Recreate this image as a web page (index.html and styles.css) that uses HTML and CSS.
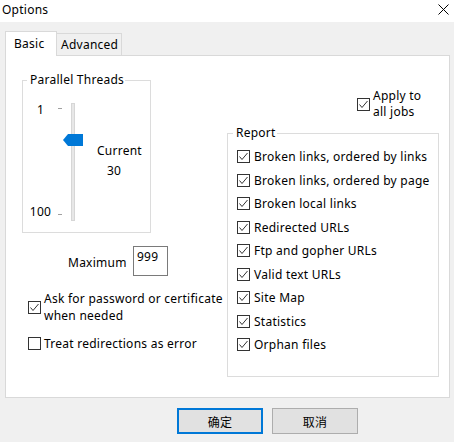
FILE: index.html
```html
<!DOCTYPE html>
<html lang="en">
  <head>
    <meta charset="UTF-8" />
    <title>Options</title>
    <link rel="stylesheet" href="styles.css">
  </head>
  <body>
    <div class="titlebar">
      <span>Options</span>
      <svg class="close" width="11" height="11" viewBox="0 0 11 11">
        <path d="M0.5 0.5 L10.5 10.5 M10.5 0.5 L0.5 10.5" stroke="#000" stroke-width="1" fill="none" />
      </svg>
    </div>

    <div class="tabs">
      <div class="tab active">Basic</div>
      <div class="tab">Advanced</div>
    </div>

    <div class="panel">
      <div class="col-left">
        <fieldset class="group threads">
          <legend>Parallel Threads</legend>
          <div class="slider">
            <div class="scale"><span>1</span><span>100</span></div>
            <div class="ticks"><i></i><i></i></div>
            <div class="track"><div class="thumb"></div></div>
            <div class="current">
              <div>Current</div>
              <div class="value">30</div>
            </div>
          </div>
        </fieldset>

        <div class="max-row">
          <span class="max-label">Maximum</span>
          <div class="num-box">999</div>
        </div>

        <label class="check ask">
          <span class="box"><svg viewBox="0 0 11 11"><polyline points="1.5,5.5 4,8.5 9.5,2" /></svg></span>
          <span>Ask for password or certificate<br>when needed</span>
        </label>
        <label class="check treat">
          <span class="box"></span>
          <span>Treat redirections as error</span>
        </label>
      </div>

      <div class="col-right">
        <label class="check apply">
          <span class="box"><svg viewBox="0 0 11 11"><polyline points="1.5,5.5 4,8.5 9.5,2" /></svg></span>
          <span>Apply to<br>all jobs</span>
        </label>

        <fieldset class="group report">
          <legend>Report</legend>
          <label class="check"><span class="box"><svg viewBox="0 0 11 11"><polyline points="1.5,5.5 4,8.5 9.5,2" /></svg></span><span>Broken links, ordered by links</span></label>
          <label class="check"><span class="box"><svg viewBox="0 0 11 11"><polyline points="1.5,5.5 4,8.5 9.5,2" /></svg></span><span>Broken links, ordered by page</span></label>
          <label class="check"><span class="box"><svg viewBox="0 0 11 11"><polyline points="1.5,5.5 4,8.5 9.5,2" /></svg></span><span>Broken local links</span></label>
          <label class="check"><span class="box"><svg viewBox="0 0 11 11"><polyline points="1.5,5.5 4,8.5 9.5,2" /></svg></span><span>Redirected URLs</span></label>
          <label class="check"><span class="box"><svg viewBox="0 0 11 11"><polyline points="1.5,5.5 4,8.5 9.5,2" /></svg></span><span>Ftp and gopher URLs</span></label>
          <label class="check"><span class="box"><svg viewBox="0 0 11 11"><polyline points="1.5,5.5 4,8.5 9.5,2" /></svg></span><span>Valid text URLs</span></label>
          <label class="check"><span class="box"><svg viewBox="0 0 11 11"><polyline points="1.5,5.5 4,8.5 9.5,2" /></svg></span><span>Site Map</span></label>
          <label class="check"><span class="box"><svg viewBox="0 0 11 11"><polyline points="1.5,5.5 4,8.5 9.5,2" /></svg></span><span>Statistics</span></label>
          <label class="check"><span class="box"><svg viewBox="0 0 11 11"><polyline points="1.5,5.5 4,8.5 9.5,2" /></svg></span><span>Orphan files</span></label>
        </fieldset>
      </div>
    </div>

    <div class="buttons">
      <div class="btn default">确定</div>
      <div class="btn">取消</div>
    </div>
  </body>
</html>
```

FILE: styles.css
```css
* {
  box-sizing: border-box;
}

body {
  margin: 0;
  width: 454px;
  height: 442px;
  overflow: hidden;
  background-color: #f0f0f0;
  font-family: "Noto Sans", "Noto Sans CJK SC", sans-serif;
  font-size: 12px;
  letter-spacing: 0.25px;
  color: #000;
}

.titlebar {
  height: 22px;
  background-color: #fff;
  display: flex;
  justify-content: space-between;
  align-items: center;
  padding: 0 5px 4px 2px;
}

/* tabs */
.tabs {
  display: flex;
  align-items: flex-start;
  height: 24px;
  margin: 9px 0 0 5px;
  position: relative;
  z-index: 1;
}

.tab {
  display: flex;
  align-items: center;
  border: 1px solid #d9d9d9;
  border-bottom: none;
}

.tab.active {
  width: 52px;
  height: 25px;
  padding: 0 0 2px 8px;
  background-color: #fff;
}

.tab:not(.active) {
  width: 65px;
  height: 22px;
  margin-top: 2px;
  padding-left: 4px;
  border-left: none;
}

.panel {
  display: flex;
  height: 343px;
  margin: 0 4px 0 5px;
  padding: 16px 0 0 16px;
  background-color: #fff;
  border: 1px solid #d9d9d9;
}

/* group boxes */
.group {
  margin: 0;
  border: 1px solid #dcdcdc;
}

.group legend {
  line-height: 16px;
  padding: 0 1px 0 3px;
}

.col-left {
  width: 205px;
}

.threads {
  width: 129px;
  padding: 14px 0 10px 0;
}

.threads legend {
  margin-left: 4px;
}

.slider {
  display: flex;
  height: 120px;
  line-height: 16px;
}

.scale {
  width: 35px;
  display: flex;
  flex-direction: column;
  justify-content: space-between;
  align-items: center;
  padding-bottom: 2px;
}

.ticks {
  width: 5px;
  display: flex;
  flex-direction: column;
  justify-content: space-between;
  padding: 6px 0 7px;
}

.ticks i {
  display: block;
  width: 4px;
  height: 1px;
  background-color: #a0a0a0;
}

.track {
  position: relative;
  width: 4px;
  height: 118px;
  margin: 1px 0 0 8px;
  background-color: #e7e7e7;
  border: 1px solid #d6d6d6;
}

.thumb {
  position: absolute;
  left: -9px;
  top: 30px;
  width: 20px;
  height: 12px;
  background-color: #0078d7;
  clip-path: polygon(0 50%, 5px 0, 100% 0, 100% 100%, 5px 100%);
}

.current {
  margin-left: 22px;
  padding-top: 41px;
}

.current .value {
  margin-top: 4px;
  padding-left: 10px;
}

.max-row {
  display: flex;
  align-items: center;
  height: 30px;
  margin-top: 13px;
  padding-left: 46px;
}

.max-label {
  width: 65px;
  padding-top: 3px;
}

.num-box {
  width: 35px;
  height: 30px;
  padding: 2px 0 0 3px;
  line-height: 16px;
  border: 1px solid #7a7a7a;
  background-color: #fff;
}

/* checkboxes */
.check {
  display: flex;
  align-items: center;
  gap: 3px;
  line-height: 17px;
  white-space: nowrap;
}

.box {
  flex: none;
  width: 13px;
  height: 13px;
  border: 1px solid #333;
  background-color: #fff;
}

.box svg {
  display: block;
  width: 11px;
  height: 11px;
}

.box polyline {
  fill: none;
  stroke: #333;
  stroke-width: 1;
}

.ask {
  margin-top: 14px;
  padding-left: 6px;
}

.treat {
  margin-top: 11px;
  padding-left: 6px;
}

.col-right {
  width: 209px;
  padding-top: 16px;
}

.apply {
  align-items: flex-start;
  padding-left: 130px;
  line-height: 16px;
}

.apply .box {
  margin-top: 10px;
}

.report {
  height: 252px;
  margin-top: 5px;
  padding: 4px 8px 0 9px;
}

.report legend {
  margin-left: -4px;
}

.report .check {
  height: 23.5px;
  gap: 4px;
  overflow: hidden;
}

/* dialog buttons */
.buttons {
  display: flex;
  gap: 9px;
  margin-top: 10px;
  padding-left: 177px;
}

.btn {
  display: flex;
  align-items: center;
  justify-content: center;
  width: 86px;
  height: 26px;
  font-family: "Noto Sans CJK SC", sans-serif;
  background-color: #e1e1e1;
  border: 1px solid #adadad;
}

.btn.default {
  border: 2px solid #0078d7;
}
```
